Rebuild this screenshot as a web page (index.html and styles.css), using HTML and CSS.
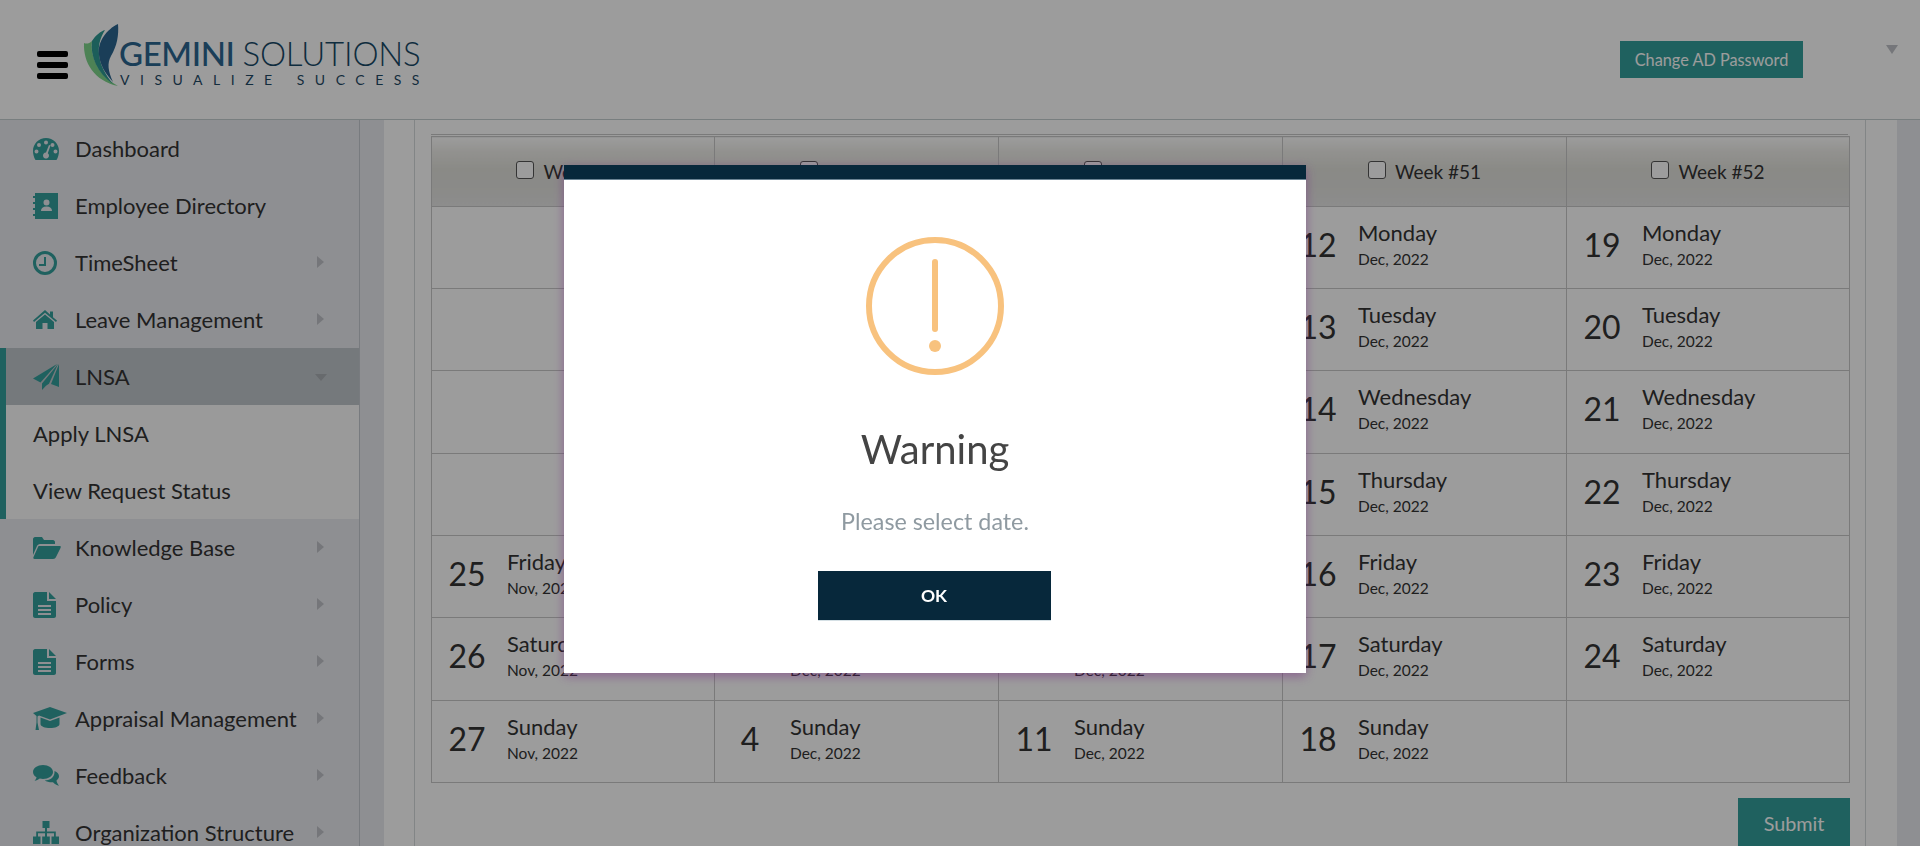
FILE: index.html
```html
<!DOCTYPE html>
<html lang="en">
<head>
<meta charset="utf-8">
<title>LNSA</title>
<link rel="stylesheet" href="styles.css">
</head>
<body>
<div class="page">
  <header class="topbar">
    <div class="burger"><span></span><span></span><span></span></div>
    <div class="logo">
      <svg class="logo-leaf" viewBox="0 0 36 63" width="36" height="63">
        <path fill="#7fd48c" d="M1 19C0 38 11 57 35 62C24 56 15 47 11 35C9 29 8 23 9 17C6 20 3 20 1 19Z"/>
        <path fill="#2f9a94" d="M9 17C7 32 14 49 30 60C22 50 17 41 16 30C15 22 17 14 22 6C18 7 12 12 9 17Z"/>
        <path fill="#2b6690" d="M35 0C24 5 14 18 16 31C17 40 21 48 30 58C25 47 24 39 28 32C34 22 36 11 35 0Z"/>
      </svg>
      <div class="logo-text">
        <div class="logo-name"><span class="logo-gem">GEMINI</span><span class="logo-sol">SOLUTIONS</span></div>
        <div class="logo-tag">VISUALIZE SUCCESS</div>
      </div>
    </div>
    <a class="ad-btn">Change AD Password</a>
    <span class="user-caret"></span>
  </header>
  <div class="shell">
    <nav class="sidebar">
      <a class="nav-item"><span class="nav-icon"><svg viewBox="0 0 26 22" width="26" height="22"><path fill-rule="evenodd" d="M13 0C5.800 0 0 5.800 0 13C0 16 .8 19.300 2.500 22H23.500C25.200 19.300 26 16 26 13C26 5.800 20.200 0 13 0ZM13 2.500A2 2 0 1 1 13 6.500A2 2 0 0 1 13 2.500ZM6 5A2 2 0 1 1 6 9A2 2 0 0 1 6 5ZM3.500 11.500A2 2 0 1 1 3.500 15.500A2 2 0 0 1 3.500 11.500ZM22.500 11.500A2 2 0 1 1 22.500 15.500A2 2 0 0 1 22.500 11.500ZM19.500 5A2 2 0 1 1 19.500 9A2 2 0 0 1 19.500 5ZM16 7L17.500 7.500L14.800 15.200A3 3 0 1 1 13 14.600Z"/></svg></span>Dashboard</a>
      <a class="nav-item"><span class="nav-icon"><svg viewBox="0 0 25 26" width="25" height="26"><path fill-rule="evenodd" d="M2 0H25V26H2V23H0V21H2V17H0V15H2V11H0V9H2V5H0V3H2ZM13.500 6.500A3 3 0 0 0 13.500 12.500A3 3 0 0 0 13.500 6.500ZM8 18H19C19 15 17 13.500 13.500 13.500C10 13.500 8 15 8 18Z"/></svg></span>Employee Directory</a>
      <a class="nav-item has-sub"><span class="nav-icon"><svg viewBox="0 0 24 24" width="24" height="24"><path fill-rule="evenodd" d="M12 0A12 12 0 1 0 12 24A12 12 0 0 0 12 0ZM12 3A9 9 0 1 1 12 21A9 9 0 0 1 12 3ZM13 6H11V13H6V15H13Z"/></svg></span>TimeSheet</a>
      <a class="nav-item has-sub"><span class="nav-icon"><svg viewBox="0 0 24 19" width="24" height="19"><path d="M12 0L17 4.500V1.500H20V7.200L24 10.500L23 12L12 2.800L1 12L0 10.500Z"/><path d="M12 4.500L21 12V19H14.500V13H9.500V19H3V12Z"/></svg></span>Leave Management</a>
      <div class="nav-group">
        <a class="nav-item is-active"><span class="nav-icon"><svg viewBox="0 0 26 26" width="26" height="26"><path d="M26 0V23L18 20L26 0ZM25 0L9 19.500V26L13 21.800L16 19.800ZM24 0L0 14.500L7.500 18.500Z"/></svg></span>LNSA<span class="caret-down"></span></a>
        <a class="nav-sub">Apply LNSA</a>
        <a class="nav-sub">View Request Status</a>
      </div>
      <a class="nav-item has-sub"><span class="nav-icon"><svg viewBox="0 0 28 22" width="28" height="22"><path d="M0 2C0 1 1 0 2 0H9L11 3H20C21 3 22 4 22 5V7H7C5.500 7 4.500 8 4 9L0 18Z"/><path d="M6 9H27C28 9 28 10 27.500 11L23 20C22.500 21.300 21.500 22 20 22H1.500C.5 22 0 21 .5 20L5 10C5.200 9.500 5.500 9 6 9Z"/></svg></span>Knowledge Base</a>
      <a class="nav-item has-sub"><span class="nav-icon"><svg viewBox="0 0 23 26" width="23" height="26"><use href="#doc"/></svg></span>Policy</a>
      <a class="nav-item has-sub"><span class="nav-icon"><svg viewBox="0 0 23 26" width="23" height="26"><use href="#doc"/></svg></span>Forms</a>
      <a class="nav-item has-sub"><span class="nav-icon"><svg viewBox="0 0 34 23" width="34" height="23"><path d="M17 0L34 6L17 12.500L6 8.500L4.500 9.500V15.500L6 23H2.500L3.500 15.500V9L0 6Z"/><path d="M7.500 10.500L17 14L26.500 10.500V17C26.500 19.500 22 21 17 21C12 21 7.500 19.500 7.500 17Z"/></svg></span>Appraisal Management</a>
      <a class="nav-item has-sub"><span class="nav-icon"><svg viewBox="0 0 26 21" width="26" height="21"><path d="M10 0C15.500 0 20 3 20 7C20 11 15.500 14 10 14C8.800 14 7.800 13.900 6.800 13.600C5.200 14.900 3.500 15.500 1.500 15.800C2.500 14.800 3.300 13.500 3.500 12.200C1.300 11 0 9 0 7C0 3 4.500 0 10 0Z"/><path d="M21.500 6C24.500 7 26 9 26 11.300C26 13 25 14.500 23.500 15.500C23.700 17 24.500 18.800 26 20.800C24 20.500 21.500 19 20 17.300C17 17.500 13.500 16.800 11.800 15.300C17.500 15.300 22 12 21.500 6Z"/></svg></span>Feedback</a>
      <a class="nav-item has-sub"><span class="nav-icon"><svg viewBox="0 0 26 23" width="26" height="23"><path d="M9.500 0H16.500V7H14V10.500H22.800V15.500H26V23H18.500V15.500H21V12.200H14V15.500H16.800V23H9.200V15.500H12V12.200H5V15.500H7.500V23H0V15.500H3.200V10.500H12V7H9.500Z"/></svg></span>Organization Structure</a>
    </nav>
    <main class="content">
      <section class="panel">
        <div class="grid-rule">
          <table class="cal">
            <thead>
              <tr>
                <th><label class="week"><span class="check"></span>Week #48</label></th>
                <th><label class="week"><span class="check"></span>Week #49</label></th>
                <th><label class="week"><span class="check"></span>Week #50</label></th>
                <th><label class="week"><span class="check"></span>Week #51</label></th>
                <th><label class="week"><span class="check"></span>Week #52</label></th>
              </tr>
            </thead>
            <tbody>
              <tr>
                <td></td><td></td><td></td>
                <td><div class="day"><span class="num">12</span><div><div class="dname">Monday</div><div class="dmon">Dec, 2022</div></div></div></td>
                <td><div class="day"><span class="num">19</span><div><div class="dname">Monday</div><div class="dmon">Dec, 2022</div></div></div></td>
              </tr>
              <tr>
                <td></td><td></td><td></td>
                <td><div class="day"><span class="num">13</span><div><div class="dname">Tuesday</div><div class="dmon">Dec, 2022</div></div></div></td>
                <td><div class="day"><span class="num">20</span><div><div class="dname">Tuesday</div><div class="dmon">Dec, 2022</div></div></div></td>
              </tr>
              <tr>
                <td></td><td></td><td></td>
                <td><div class="day"><span class="num">14</span><div><div class="dname">Wednesday</div><div class="dmon">Dec, 2022</div></div></div></td>
                <td><div class="day"><span class="num">21</span><div><div class="dname">Wednesday</div><div class="dmon">Dec, 2022</div></div></div></td>
              </tr>
              <tr>
                <td></td><td></td><td></td>
                <td><div class="day"><span class="num">15</span><div><div class="dname">Thursday</div><div class="dmon">Dec, 2022</div></div></div></td>
                <td><div class="day"><span class="num">22</span><div><div class="dname">Thursday</div><div class="dmon">Dec, 2022</div></div></div></td>
              </tr>
              <tr>
                <td><div class="day"><span class="num">25</span><div><div class="dname">Friday</div><div class="dmon">Nov, 2022</div></div></div></td>
                <td></td><td></td>
                <td><div class="day"><span class="num">16</span><div><div class="dname">Friday</div><div class="dmon">Dec, 2022</div></div></div></td>
                <td><div class="day"><span class="num">23</span><div><div class="dname">Friday</div><div class="dmon">Dec, 2022</div></div></div></td>
              </tr>
              <tr>
                <td><div class="day"><span class="num">26</span><div><div class="dname">Saturday</div><div class="dmon">Nov, 2022</div></div></div></td>
                <td><div class="day"><span class="num">3</span><div><div class="dname">Saturday</div><div class="dmon">Dec, 2022</div></div></div></td>
                <td><div class="day"><span class="num">10</span><div><div class="dname">Saturday</div><div class="dmon">Dec, 2022</div></div></div></td>
                <td><div class="day"><span class="num">17</span><div><div class="dname">Saturday</div><div class="dmon">Dec, 2022</div></div></div></td>
                <td><div class="day"><span class="num">24</span><div><div class="dname">Saturday</div><div class="dmon">Dec, 2022</div></div></div></td>
              </tr>
              <tr>
                <td><div class="day"><span class="num">27</span><div><div class="dname">Sunday</div><div class="dmon">Nov, 2022</div></div></div></td>
                <td><div class="day"><span class="num">4</span><div><div class="dname">Sunday</div><div class="dmon">Dec, 2022</div></div></div></td>
                <td><div class="day"><span class="num">11</span><div><div class="dname">Sunday</div><div class="dmon">Dec, 2022</div></div></div></td>
                <td><div class="day"><span class="num">18</span><div><div class="dname">Sunday</div><div class="dmon">Dec, 2022</div></div></div></td>
                <td></td>
              </tr>
            </tbody>
          </table>
        </div>
        <div class="actions"><a class="submit">Submit</a></div>
      </section>
    </main>
  </div>
  <svg class="defs" width="0" height="0"><defs><path id="doc" fill-rule="evenodd" d="M2 0H14V9H23V24C23 25 22 26 21 26H2C1 26 0 25 0 24V2C0 1 1 0 2 0ZM16 0L23 7H16ZM5 13V15H18V13ZM5 17V19H18V17ZM5 21V23H18V21Z"/></defs></svg>
</div>
<div class="overlay"></div>
<div class="modal">
  <div class="modal-head"></div>
  <div class="modal-body">
    <svg class="warn" viewBox="0 0 138 138" width="138" height="138">
      <circle cx="69" cy="69" r="66" fill="none" stroke="#f8c27e" stroke-width="6"/>
      <rect x="66" y="22" width="6" height="73" rx="3" fill="#f8c27e"/>
      <circle cx="69" cy="109" r="6" fill="#f8c27e"/>
    </svg>
    <h2 class="modal-title">Warning</h2>
    <p class="modal-msg">Please select date.</p>
    <button class="modal-ok">OK</button>
  </div>
</div>
</body>
</html>
```
FILE: styles.css
```css
* { box-sizing: border-box; }
html, body { margin: 0; height: 846px; overflow: hidden; }
body { font-family: "Lato", "Noto Sans", sans-serif; color: #3a3a3a; background: #fff; }
.page { height: 846px; display: flex; flex-direction: column; overflow: hidden; }
.topbar { height: 120px; flex: none; display: flex; align-items: flex-start; border-bottom: 1px solid #c5cfd0; background: #fff; }
.burger { width: 31px; margin: 51px 0 0 37px; display: flex; flex-direction: column; gap: 5px; flex: none; }
.burger span { display: block; height: 6px; border-radius: 2px; background: #000; }
.logo { display: flex; margin: 24px 0 0 15px; flex: none; }
.logo-leaf { display: block; flex: none; }
.logo-text { margin: 12px 0 0 0; width: 305px; }
.logo-name { font-size: 33px; line-height: 34px; white-space: nowrap; letter-spacing: -.4px; display: flex; gap: 8px; }
.logo-gem { color: #2b6690; font-weight: 500; }
.logo-sol { color: #174866; font-weight: 300; letter-spacing: -.2px; }
.logo-tag { font-size: 14px; line-height: 16px; color: #1f4a66; letter-spacing: 10.5px; white-space: nowrap; margin-top: 2px; padding-left: 1px; }
.ad-btn { margin: 41px 0 0 auto; width: 183px; height: 37px; background: #349f9c; color: #fff; font-size: 16.3px; display: flex; align-items: center; justify-content: center; flex: none; }
.user-caret { width: 0; height: 0; flex: none; margin: 45px 22px 0 83px; border-left: 6px solid transparent; border-right: 6px solid transparent; border-top: 9px solid #bfc2c7; }

.shell { flex: 1; min-height: 0; display: flex; background: #e9eaef; }
.sidebar { width: 360px; flex: none; border-right: 1px solid #c5cad0; background: #e9eaef; }
.nav-item { height: 57px; display: flex; align-items: center; padding-left: 33px; font-size: 22px; color: #333; position: relative; white-space: nowrap; }
.nav-icon { width: 42px; flex: none; display: flex; align-items: center; }
.nav-icon svg { fill: #349f9c; display: block; overflow: visible; }
.has-sub::after { content: ""; position: absolute; left: 317px; top: 22px; border-top: 6px solid transparent; border-bottom: 6px solid transparent; border-left: 7px solid #bfc2c7; }
.nav-group { border-left: 6px solid #349f9c; }
.nav-group .nav-item { padding-left: 27px; }
.is-active { background: #c0c6cb; }
.caret-down { position: absolute; left: 309px; top: 26px; border-left: 6px solid transparent; border-right: 6px solid transparent; border-top: 7px solid #a8adb2; }
.nav-sub { height: 57px; display: flex; align-items: center; padding-left: 27px; font-size: 22px; color: #333; background: #fcfcfc; }

.content { width: 1513px; flex: none; margin-left: 24px; padding-left: 30px; padding-right: 31px; background: #fff; }
.panel { height: 100%; border: 1px solid #d5dadc; border-width: 0 1px; padding: 14px 17px 0 16px; }
.grid-rule { border-top: 1px solid #c8c8c8; padding-top: 1px; }
.cal { width: 1418px; table-layout: fixed; border-collapse: collapse; }
.cal th { width: 284px; height: 69.5px; border: 1px solid #c8c8c8; font-weight: 400; background: linear-gradient(#fff 0%, #efeeea 20%, #e2e2dc 45%, #e2e2de 70%, #e6e6e6 100%); padding: 0; }
.cal th:first-child, .cal th:last-child { width: 283px; }
.cal td { height: 82.35px; border: 1px solid #c8c8c8; padding: 0; }
.week { display: inline-flex; align-items: center; font-size: 19px; color: #333; gap: 9px; }
.check { width: 18px; height: 18px; border: 1px solid #555; border-radius: 3px; background: #fff; flex: none; position: relative; top: -1px; }
.day { display: flex; align-items: center; padding: 0 0 3px 16px; color: #333; }
.num { width: 38px; flex: none; text-align: center; font-size: 32px; line-height: 40px; margin-right: 21px; position: relative; top: -1px; }
.dname { font-size: 22px; line-height: 26px; }
.dmon { font-size: 15.5px; line-height: 26px; }
.actions { display: flex; justify-content: flex-end; margin-top: 15px; margin-right: -2px; }
.submit { width: 112px; height: 50px; background: #349f9c; color: #fff; font-size: 19.8px; display: flex; align-items: center; justify-content: center; }
.defs { position: absolute; }

.overlay { position: fixed; inset: 0; background: rgba(0,0,0,.39); }
.modal { position: fixed; left: 564px; top: 165px; width: 742px; height: 508px; background: #fff; box-shadow: 0 3px 10px rgba(120,40,130,.5); display: flex; flex-direction: column; }
.modal-head { height: 15px; flex: none; background: #07283b; border-bottom: 1px solid #6b8494; }
.modal-body { flex: 1; display: flex; flex-direction: column; align-items: center; padding-top: 57px; }
.warn { display: block; flex: none; }
.modal-title { margin: 48px 0 0; font-size: 40px; line-height: 52px; font-weight: 400; color: #444; }
.modal-msg { margin: 31px 0 0; font-size: 23.3px; line-height: 30px; color: #8f9aa1; }
.modal-ok { margin: 35px 2px 0 0; width: 233px; height: 50px; border: 0; border-bottom: 1px solid #d5e0e5; background: #07283b; color: #fff; font: 700 17.5px "Lato", sans-serif; }
```
